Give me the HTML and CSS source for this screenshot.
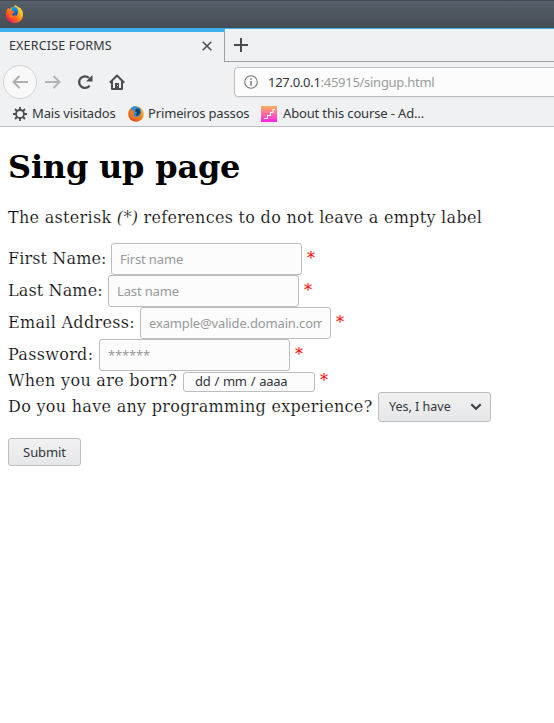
FILE: index.html
```html
<!DOCTYPE html>
<html lang="pt">
<head>
<meta charset="utf-8">
<title>EXERCISE FORMS</title>
<link rel="stylesheet" href="styles.css">
</head>
<body>
<svg width="0" height="0" class="defs">
  <defs>
    <linearGradient id="flame" x1="1" y1="0" x2="0.15" y2="1"><stop offset="0" stop-color="#fff044"/><stop offset=".4" stop-color="#ffb01c"/><stop offset=".7" stop-color="#ff5523"/><stop offset="1" stop-color="#e3125c"/></linearGradient>
    <linearGradient id="globe" x1="0" y1="0" x2="0" y2="1"><stop offset="0" stop-color="#05aaff"/><stop offset="1" stop-color="#173c9c"/></linearGradient>
    <linearGradient id="oldflame" x1="1" y1="0" x2="0" y2="1"><stop offset="0" stop-color="#ffcf3c"/><stop offset=".5" stop-color="#f17b18"/><stop offset="1" stop-color="#d43422"/></linearGradient>
    <linearGradient id="stairs" x1="0" y1="0" x2="0" y2="1"><stop offset="0" stop-color="#ffb05c"/><stop offset="1" stop-color="#ff22ee"/></linearGradient>
  </defs>
</svg>
<header class="titlebar">
  <svg class="logo" width="19" height="20" viewBox="0 0 20 20"><path d="M3.2 3.8 5 5.1 6.8 3 8 3.500l3-3 2 1.500 3.500 2 2.200 3.500.3 3.500C18.500 17 14.500 19.500 10 19.500S1 16 .8 11C.7 8 2 5.500 3.200 3.800Z" fill="url(#flame)"/><path d="M7 4.500C8 2 11 1.500 13 4.500c2 3 .5 8-3.500 8.500-3 .2-4.500-1.500-4-3l3-.8-2-2 .8-1.200z" fill="url(#globe)"/><path d="M4.500 7 8 6.500 10.500 8 8.500 9.500 7 11c2 1.500 3.500 0 5 .5-1 2.500-5 3.500-7.500 1z" fill="#ff6b20"/></svg>
</header>
<nav class="tabs">
  <div class="tab"><span class="tab-title">EXERCISE FORMS</span>
    <svg width="10" height="10" viewBox="0 0 10 10"><path d="m.7.700 8.600 8.600M9.300.7.700 9.300" stroke="#4d4f52" stroke-width="1.600"/></svg>
  </div>
  <div class="tab-rest"><svg width="14" height="14" viewBox="0 0 14 14"><path d="M7 0v14M0 7h14" stroke="#4a4c50" stroke-width="2"/></svg></div>
</nav>
<div class="toolbar">
  <span class="back"><svg width="16" height="14" viewBox="0 0 16 14"><path d="M16 7H1.500M7.500 1l-6 6 6 6" fill="none" stroke="#adaeb0" stroke-width="2"/></svg></span>
  <svg class="forward" width="16" height="14" viewBox="0 0 16 14"><path d="M0 7h14.500M8.500 1l6 6-6 6" fill="none" stroke="#b1b2b4" stroke-width="2"/></svg>
  <svg class="reload" width="16" height="16" viewBox="0 0 16 16"><path d="M12.600 11.600A5.800 5.800 0 1 1 12 4" fill="none" stroke="#4b4d51" stroke-width="2.300"/><path d="M15.500 1v6.500H9z" fill="#4b4d51"/></svg>
  <svg class="home" width="16" height="16" viewBox="0 0 16 16"><path d="M.8 8.800 8 1.500l7.200 7.300M3 7.500V15h10V7.500" fill="none" stroke="#4b4d51" stroke-width="2" stroke-linejoin="round"/><path d="M6 15V9h4v6z" fill="#4b4d51"/><path d="M8 11h1v1H8z" fill="#eee"/></svg>
  <div class="url">
    <svg width="14" height="14" viewBox="0 0 14 14"><circle cx="7" cy="7" r="6.300" fill="none" stroke="#77797b" stroke-width="1.100"/><path d="M7 6v4.700M7 3.200v1.600" stroke="#77797b" stroke-width="1.500"/></svg>
    <span class="address"><b>127.0.0.1</b>:45915/singup.html</span>
  </div>
</div>
<div class="bookmarks">
  <svg class="gear" width="14" height="14" viewBox="0 0 14 14"><circle cx="7" cy="7" r="4" fill="none" stroke="#4b4d51" stroke-width="1.800"/><path d="M7 0v3M7 11v3M0 7h3M11 7h3M2 2l2 2M10 10l2 2M12 2l-2 2M4 10l-2 2" stroke="#4b4d51" stroke-width="1.800"/></svg>
  <span class="bm visited">Mais visitados</span>
  <svg class="fox" width="16" height="16" viewBox="0 0 16 16"><circle cx="8" cy="8" r="7.800" fill="url(#oldflame)"/><path d="M3 2C5-.5 10-.2 12.500 3c1.500 3 0 7.500-3.500 8C6 11.500 4.500 9 6 7L3.500 5z" fill="#2f93d4"/><path d="M8 2.500 11.500 3l1 4-3 3-2-1 1.500-2L7 5z" fill="#144477"/><path d="M1 3.500 3.500 4l3 1-.5 2-1 2c1 2 3 2.500 5 2-1.500 3-6.500 2-8-1z" fill="#ed771f"/></svg>
  <span class="bm steps">Primeiros passos</span>
  <svg class="course" width="16" height="16" viewBox="0 0 16 16"><path d="M0 0h16v16H0z" fill="url(#stairs)"/><path d="M3 12.500h3.500v-3h3v-3h2.500v-3h2" fill="none" stroke="#fff" stroke-width="1.100"/></svg>
  <span class="bm about">About this course - Ad...</span>
</div>
<main>
  <h1>Sing up page</h1>
  <p class="note text">The asterisk <i>(*)</i> references to do not leave a empty label</p>
  <form>
    <div class="row"><label class="text first" for="first">First Name:</label><input id="first" type="text" placeholder="First name"><span class="req">*</span></div>
    <div class="row"><label class="text last" for="last">Last Name:</label><input id="last" type="text" placeholder="Last name"><span class="req">*</span></div>
    <div class="row"><label class="text email" for="email">Email Address:</label><input id="email" type="text" placeholder="example@valide.domain.com"><span class="req">*</span></div>
    <div class="row"><label class="text pass" for="pass">Password:</label><input id="pass" type="password" placeholder="******"><span class="req">*</span></div>
    <div class="row date-row"><span class="text born">When you are born?</span><span class="date"><span>dd</span><span>/</span><span>mm</span><span>/</span><span>aaaa</span></span><span class="req">*</span></div>
    <div class="row select-row"><span class="text exp">Do you have any programming experience?</span><span class="select">Yes, I have<svg width="12" height="8" viewBox="0 0 12 8"><path d="m1.300 1.300 4.700 4.500 4.700-4.500" fill="none" stroke="#3b3f43" stroke-width="2.100"/></svg></span></div>
    <button type="button">Submit</button>
  </form>
</main>
</body>
</html>
```
FILE: styles.css
```css
* { box-sizing: border-box; }
html, body { margin: 0; height: 100%; overflow: hidden; }
body { background: #fff; font: 13px/18px "Noto Sans", sans-serif; color: #31363b; }
svg { display: block; flex: none; }
.defs { position: absolute; }
.titlebar { height: 29px; padding: 4px 0 0 5px; background: linear-gradient(#56606a, #454c54); border-top: 1px solid #414a52; border-bottom: 1px solid #3daee9; }
.titlebar .logo { margin-top: -1px; }
.tabs { display: flex; height: 33px; background: #eff0f1; }
.tab { display: flex; align-items: center; justify-content: space-between; width: 225px; padding: 0 12px 2px 9px; background: #f0f1f3; border-top: 3px solid #3daee9; border-right: 1px solid #9fa0a3; }
.tab-title { font-size: 12.500px; letter-spacing: .17px; }
.tab-rest { flex: 1; padding: 9px 0 0 9px; border-bottom: 1px solid #9fa0a3; }
.toolbar { display: flex; align-items: center; height: 40px; background: #f0f1f3; padding-left: 3px; }
.back { display: flex; align-items: center; justify-content: center; flex: none; width: 34px; height: 34px; border: 1px solid #d2d3d4; border-radius: 50%; background: #f8f8f9; }
.forward { margin-left: 8px; }
.reload { margin-left: 16px; }
.home { margin-left: 16px; }
.url { display: flex; align-items: center; width: 340px; height: 30px; margin-left: 109px; padding-left: 9px; border: 1px solid #bcbdbf; border-radius: 4px; background: #fcfcfc; flex: none; box-shadow: 0 1px 2px #0000000d; }
.address { margin-left: 10px; color: #999b9d; white-space: nowrap; letter-spacing: -.28px; }
.address b { font-weight: 400; color: #31363b; }
.bookmarks { display: flex; align-items: center; height: 25px; padding-left: 13px; background: #f0f1f3; border-bottom: 1px solid #bfc0c2; white-space: nowrap; }
.bookmarks svg { margin-bottom: 1px; }
.gear { margin-right: 5px; }
.bm { margin-top: -2px; line-height: 22px; letter-spacing: -.15px; }
.visited { width: 96px; }
.fox { margin-right: 4px; }
.steps { width: 113px; }
.course { margin-right: 6px; }
main { padding: 21px 8px 0; color: #000; }
h1 { margin: 0; font: bold 32px/38px "DejaVu Serif", serif; letter-spacing: -.2px; }
.text { font-family: "DejaVu Serif", serif; font-size: 16px; line-height: 20px; letter-spacing: .3px; white-space: nowrap; color: #000; -webkit-text-stroke: .2px #fff; }
.note { margin: 22px 0 15px; }
.row { display: flex; height: 32px; }
.row .text { line-height: 31px; flex: none; }
.first { width: 103px; }
.row .first, .row .last { letter-spacing: .13px; }
.last { width: 100px; }
.email { width: 132px; }
.pass { width: 91px; }
input { width: 191px; height: 32px; padding: 0 8px; border: 1px solid #bcbdbe; border-radius: 3px; background: #fcfcfc; font: 13px "Noto Sans", sans-serif; letter-spacing: -.15px; color: #31363b; }
input::placeholder { color: #97999b; opacity: 1; }
.req { margin-left: 5px; font: 16px/32px "DejaVu Serif", serif; color: #f00; }
.date-row { height: 21px; }
.date-row .text, .date-row .req { line-height: 20px; }
.born { width: 175px; }
.date { display: flex; gap: 4px; width: 132px; height: 20px; margin-top: 1px; padding-left: 11px; border: 1px solid #bcbdbe; border-radius: 3px; background: #fcfcfc; line-height: 17px; letter-spacing: -.3px; color: #31363b; }
.select-row { height: 30px; }
.select-row .text { line-height: 30px; }
.exp { width: 370px; }
.select { display: flex; align-items: center; justify-content: space-between; width: 113px; height: 30px; padding: 0 8px 0 10px; border: 1px solid #bcbdbe; border-radius: 3px; background: linear-gradient(#f1f1f2, #e6e7e9); font-size: 12.500px; color: #31363b; }
button { display: block; width: 73px; height: 28px; margin-top: 16px; padding: 0; border: 1px solid #bcbdbe; border-radius: 3px; background: linear-gradient(#f1f1f2, #e6e7e9); font: 13px "Noto Sans", sans-serif; letter-spacing: -.1px; color: #31363b; }
```
